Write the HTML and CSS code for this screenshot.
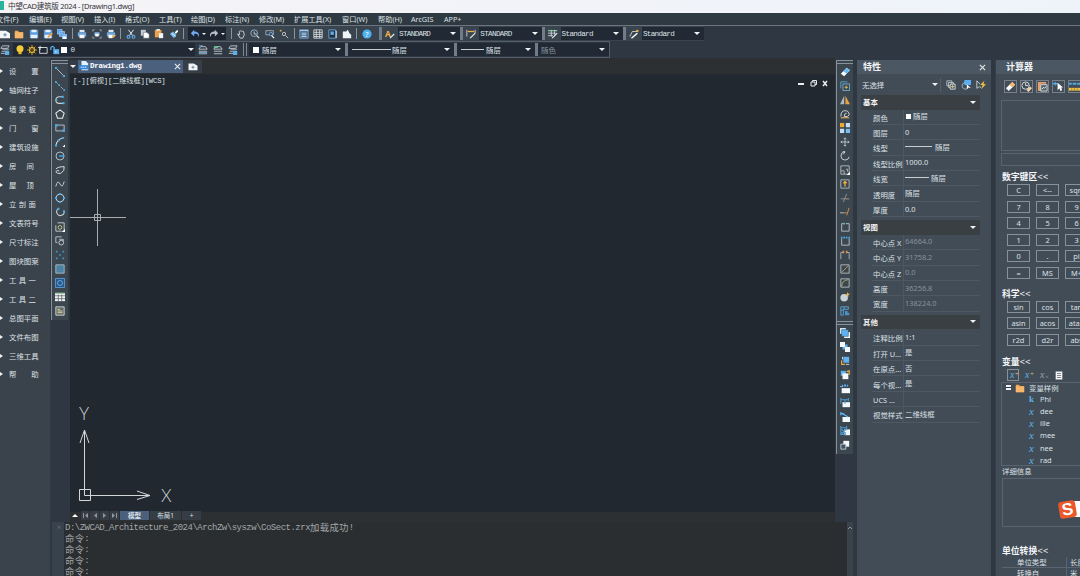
FILE: index.html
```
<!DOCTYPE html>
<html>
<head>
  <meta charset="utf-8">
  <title>中望CAD建筑版 2024</title>
  <link rel="stylesheet" href="styles.css">
</head>
<body>
  <!-- icon set -->
  <svg class="defs" width="0" height="0">
    <symbol id="new" viewBox="0 0 12 12"><path d="M0 2h7l5 3v6H0z" fill="#f2f5f7"/><path d="M6 5v4M4 7h4" stroke="#4b6f8c"/></symbol>
    <symbol id="open" viewBox="0 0 12 12"><path d="M1 2h4l1 2h5v7H1z" fill="#f0a552"/><path d="M1 4h10v7H1z" fill="#f6b76d"/></symbol>
    <symbol id="save" viewBox="0 0 12 12"><path d="M1 1h10v10H1z" fill="#5b9be0"/><path d="M3 1h6v3H3zM2 7h8v4H2z" fill="#e9f1f8"/></symbol>
    <symbol id="saveas" viewBox="0 0 12 12"><path d="M1 1h10v10H1z" fill="#5b9be0"/><path d="M3 1h6v3H3zM2 7h8v4H2z" fill="#e9f1f8"/><path d="M6 10l5-5" stroke="#f0a13a" stroke-width="2"/></symbol>
    <symbol id="saveall" viewBox="0 0 12 12"><path d="M0 0h6v6H0zM3 3h6v6H3z" fill="#5b9be0" stroke="#a9cff2" stroke-width=".8"/><path d="M6 6h6v6H6z" fill="#7db6ee"/><path d="M7 9h4v3H7z" fill="#fff"/></symbol>
    <symbol id="print" viewBox="0 0 12 12"><path d="M3 1h6v3H3z" fill="#dfe8f0"/><path d="M1 4h10v5H1z" fill="#6fa8dc"/><path d="M3 7h6v4H3z" fill="#f5f8fa"/></symbol>
    <symbol id="preview" viewBox="0 0 12 12"><path d="M1 3V1h2M9 1h2v2M11 9v2H9M3 11H1V9" fill="none" stroke="#aab6c0"/><path d="M3 4h6v4H3z" fill="#8cc0ef"/><path d="M4 6h4v3H4z" fill="#fff"/></symbol>
    <symbol id="plot" viewBox="0 0 12 12"><path d="M3 1h6v3H3z" fill="#dfe8f0"/><path d="M1 4h10v5H1z" fill="#6fa8dc"/><path d="M3 7h5v4H3z" fill="#fff"/><path d="M8 10l3-3" stroke="#f2b04a" stroke-width="2"/></symbol>
    <symbol id="cut" viewBox="0 0 12 12"><path d="M3 1l5 7M9 1L4 8" stroke="#e6ebef" stroke-width="1.2"/><g fill="none" stroke="#61abea" stroke-width="1.3"><circle cx="3" cy="9.3" r="1.7"/><circle cx="9" cy="9.3" r="1.7"/></g></symbol>
    <symbol id="copy" viewBox="0 0 12 12"><path d="M1 1h6v7H1z" fill="#c4ccd3"/><path d="M4 4h4l3 2v5H4z" fill="#fff" stroke="#4b5660" stroke-width=".6"/></symbol>
    <symbol id="paste" viewBox="0 0 12 12"><path d="M1 1h8v9H1z" fill="#eaa14d"/><path d="M3 0h4v2H3z" fill="#eee"/><path d="M6 5h5v6H6z" fill="#f4f7f9"/></symbol>
    <symbol id="brush" viewBox="0 0 12 12"><path d="M7 4l3-3 1 2-3 3z" fill="#fff"/><path d="M1 6l4-3 4 4-3 4z" fill="#72b5ee"/><path d="M3 5l5 4" stroke="#fff"/></symbol>
    <symbol id="undo" viewBox="0 0 12 12"><path d="M5 1L1 5l4 4V6c3-1 5 0 5 4 2-4 0-7-5-7z" fill="#70aaf0"/></symbol>
    <symbol id="redo" viewBox="0 0 12 12"><path d="M7 1l4 4-4 4V6C4 5 2 6 2 10 0 6 2 3 7 3z" fill="#b9c0c8"/></symbol>
    <symbol id="pan" viewBox="0 0 12 12"><path d="M2 6l2 1V3l1-1 1 1 1-1 1 1 1 0 1 4-2 4H5z" fill="none" stroke="#dfe4e8"/></symbol>
    <symbol id="zoomrt" viewBox="0 0 12 12"><circle cx="5" cy="5" r="4" fill="none" stroke="#9dc2df"/><path d="M5 3v3h3" fill="none" stroke="#dfe4e8"/><path d="M8 8l3 3" stroke="#dfe4e8" stroke-width="1.4"/></symbol>
    <symbol id="zoomwin" viewBox="0 0 12 12"><path d="M1 2h9v5H1z" fill="none" stroke="#a8b5c1"/><circle cx="7" cy="6" r="2" fill="#3b444d" stroke="#72b5ee"/><path d="M8 8l3 3" stroke="#fff" stroke-width="1.4"/></symbol>
    <symbol id="zoomprev" viewBox="0 0 12 12"><path d="M1 1h2v2H1z" fill="#e3b044"/><circle cx="6" cy="6" r="2" fill="none" stroke="#cfd6dc"/><path d="M8 8l3 3" stroke="#cfd6dc"/></symbol>
    <symbol id="props" viewBox="0 0 12 12"><path d="M1 1h10v10H1z" fill="#3e6487" stroke="#7fb0d8"/><path d="M1 2h10M3 5h6M3 7h6M3 9h6" stroke="#dfe8f0"/></symbol>
    <symbol id="grid" viewBox="0 0 12 12"><path d="M1 1h10v10H1zM4 1v10M8 1v10M1 4h10M1 6.500h10M1 9h10" fill="none" stroke="#d9e0e6"/></symbol>
    <symbol id="palette" viewBox="0 0 12 12"><path d="M1 1h8v10H1z" fill="#25303b" stroke="#66ace5"/><path d="M3 3h4v4H3z" fill="#66ace5"/><path d="M10 2v9" stroke="#e6edf2"/></symbol>
    <symbol id="cloud" viewBox="0 0 12 12"><path d="M1 3h4l2-2 2 4 2 2v4H1z" fill="#f1f4f6"/></symbol>
    <symbol id="help" viewBox="0 0 12 12"><circle cx="6" cy="6" r="5.500" fill="#4fb0ee"/><text x="6" y="9.200" font-size="9" text-anchor="middle" fill="#fff">?</text></symbol>
    <symbol id="textstyle" viewBox="0 0 12 12"><text x="0" y="9" font-size="10" fill="#f0b04a" font-weight="bold">A</text><path d="M6 11l5-5" stroke="#e3e9ee" stroke-width="1.500"/></symbol>
    <symbol id="dimstyle" viewBox="0 0 12 12"><path d="M1 1v8M11 1v4" stroke="#d9dfe5"/><path d="M2 3h8" stroke="#f0b04a" stroke-width="1.500"/><path d="M5 11l6-6" stroke="#e3e9ee" stroke-width="1.500"/></symbol>
    <symbol id="tablestyle" viewBox="0 0 12 12"><path d="M0 2h11M0 5h9M0 8h6M4 1v8M8 1v6" stroke="#d9dfe5"/><path d="M0 2h11" stroke="#79c590"/><path d="M5 11l6-6" stroke="#e3e9ee" stroke-width="1.500"/></symbol>
    <symbol id="leader" viewBox="0 0 12 12"><path d="M1 9l3-6h6" fill="none" stroke="#d9dfe5"/><circle cx="10" cy="2.500" r="1.500" fill="#f0b04a"/><path d="M3 11l7-6" stroke="#fff" stroke-width="1.700"/></symbol>
    <symbol id="layers" viewBox="0 0 12 12"><path d="M3 1h8L9 4H1zM3 5h8M2 7.500h8M1 10h10" fill="none" stroke="#cbd3da"/><path d="M6 7h5v5H6z" fill="#5faee8"/></symbol>
    <symbol id="layer2" viewBox="0 0 12 12"><path d="M3 2h6l2 3H1zM1 7.500h10M1 10.500h10" fill="none" stroke="#cbd3da"/><path d="M1 1h5M1 9h10" stroke="#66b3e9"/></symbol>
    <symbol id="layer3" viewBox="0 0 12 12"><path d="M3 2h6l2 3H1zM1 7.500h10M1 10.500h10" fill="none" stroke="#cbd3da"/><path d="M1 2.500h5" stroke="#66c59a" stroke-width="2"/></symbol>
    <symbol id="bulb" viewBox="0 0 12 12"><circle cx="6" cy="4.500" r="4.200" fill="#f6cb3a"/><path d="M4 8h4v3H4z" fill="#e5b52b"/></symbol>
    <symbol id="sun" viewBox="0 0 12 12"><path d="M6 0v12M0 6h12M2 2l8 8M10 2l-8 8" stroke="#f4bd31"/><circle cx="6" cy="6" r="3" fill="#57491f" stroke="#f4bd31" stroke-width="1.300"/></symbol>
    <symbol id="vp" viewBox="0 0 12 12"><path d="M2 3h9v7H2z" fill="none" stroke="#e5e9ed"/><path d="M0 3h5M2.500 1v5" stroke="#e5e9ed"/></symbol>
    <symbol id="lock" viewBox="0 0 12 12"><path d="M1 6V3q2-3 4 0v3" fill="none" stroke="#5ab1ee" stroke-width="1.500"/><path d="M4 5h7v6H4z" fill="#5ab1ee"/><path d="M7 7v2" stroke="#fff"/></symbol>
    <symbol id="dwg" viewBox="0 0 12 12"><path d="M3 0h5l3 3v8H3z" fill="#e9f3fc"/><path d="M0 5h11v5H0z" fill="#2f87dc"/><path d="M2 7.500h7" stroke="#fff" stroke-dasharray="2 .6"/></symbol>
    <symbol id="line" viewBox="0 0 12 12"><path d="M1 1l10 10" stroke="#c7d0d6"/><path d="M0 0h2.500v2.500H0zM9.500 9.500H12V12H9.500z" fill="#47a9e8"/></symbol>
    <symbol id="xline" viewBox="0 0 12 12"><path d="M1 1l10 10" stroke="#b9cbd6" stroke-dasharray="3 1.500"/><path d="M0 0h2v2H0zM4 4h2v2H4zM10 10h2v2h-2z" fill="#47a9e8"/></symbol>
    <symbol id="pline" viewBox="0 0 12 12"><path d="M9 2H5a4 4 0 0 0 0 8h5" fill="none" stroke="#c7d0d6" stroke-width="1.300"/><path d="M8 1h2.500v2.500H8zM9 8.500h2.500V11H9zM1 5h2v2H1z" fill="#47a9e8"/></symbol>
    <symbol id="polygon" viewBox="0 0 12 12"><path d="M6 1l5 4-2 6H3L1 5z" fill="none" stroke="#e5eaed" stroke-width="1.300"/></symbol>
    <symbol id="rect" viewBox="0 0 12 12"><path d="M1 2.500h10v7H1z" fill="none" stroke="#c7d0d6"/><path d="M0 1.500h3V4.500H0zM9 7.500h3v3H9z" fill="#47a9e8"/></symbol>
    <symbol id="arc" viewBox="0 0 12 12"><path d="M1 11Q2 3 10 1" fill="none" stroke="#d5dce1" stroke-width="1.300"/><path d="M0 9h2.500v2.500H0zM3 3h2.500v2.500H3zM9 0h2v2H9z" fill="#47a9e8"/><path d="M12 9v3H9z" fill="#fff"/></symbol>
    <symbol id="circle" viewBox="0 0 12 12"><circle cx="6" cy="6" r="4.800" fill="none" stroke="#c7d0d6"/><path d="M5 6h6" stroke="#47a9e8" stroke-width="1.800"/></symbol>
    <symbol id="cloudrev" viewBox="0 0 12 12"><path d="M1 5q2-3 10-3 1 5-4 8-5 1-6-2 1-2 4-1" fill="none" stroke="#d5dce1" stroke-width="1.200"/></symbol>
    <symbol id="spline" viewBox="0 0 12 12"><path d="M1 9Q3 0 6 6t5-3" fill="none" stroke="#b8cbd2" stroke-width="1.200"/></symbol>
    <symbol id="ellipse" viewBox="0 0 12 12"><circle cx="6" cy="6" r="4.600" fill="none" stroke="#c5d7e0" stroke-width="1.300"/><path d="M4.800 0h2.400v2.400H4.800zM4.800 9.600h2.400V12H4.800zM0 4.800h2.400v2.400H0zM9.600 4.800H12v2.400H9.600z" fill="#47a9e8"/></symbol>
    <symbol id="earc" viewBox="0 0 12 12"><path d="M4 2a4.500 4.500 0 1 0 7 3" fill="none" stroke="#c7d0d6" stroke-width="1.300"/><path d="M3 1h2.400v2.400H3zM9.600 4H12v2.400H9.600z" fill="#47a9e8"/></symbol>
    <symbol id="insert" viewBox="0 0 12 12"><path d="M3 1h8v8M1 4v7h7" fill="none" stroke="#d5dce1"/><circle cx="6" cy="6.500" r="2.300" fill="none" stroke="#d3d987"/><path d="M12 8v4H8z" fill="#fff"/></symbol>
    <symbol id="block" viewBox="0 0 12 12"><path d="M1 8V1h7M1 8h2" fill="none" stroke="#c7d0d6"/><path d="M5 4h5v2" fill="none" stroke="#c7d0d6"/><circle cx="7.500" cy="8" r="2.800" fill="none" stroke="#d5dce1"/></symbol>
    <symbol id="point" viewBox="0 0 12 12"><path d="M1 1h2v2H1zM9 1h2v2H9zM5 5h2v2H5zM1 9h2v2H1zM9 9h2v2H9z" fill="#3f95c8"/></symbol>
    <symbol id="hatch" viewBox="0 0 12 12"><path d="M1 1h10v10H1z" fill="#477e9f" stroke="#b7c4cb"/><path d="M3 5l2-2M3 9l6-6M7 9l2-2" stroke="#5b9bbd" stroke-width=".8"/></symbol>
    <symbol id="region" viewBox="0 0 12 12"><path d="M.6.6h10.800v10.800H.6z" fill="#29588a" stroke="#5da0df"/><circle cx="6" cy="6" r="3" fill="none" stroke="#72b4eb"/></symbol>
    <symbol id="table" viewBox="0 0 12 12"><path d="M0 1h12v10H0z" fill="#f0f4f3"/><path d="M0 1.500h12" stroke="#68ae72"/><path d="M0 4.500h12M0 8h12M4 3v9M8 3v9" stroke="#48525b" stroke-width=".8"/></symbol>
    <symbol id="mtext" viewBox="0 0 12 12"><path d="M1 1h10v10H1z" fill="#62696b" stroke="#dde2e2"/><path d="M3 4h3M3 6h6M3 8h6" stroke="#f0e493"/></symbol>
    <symbol id="erase" viewBox="0 0 12 12"><path d="M1 8l7-7 4 3-7 7z" fill="#fff"/><path d="M4 5l4-4 4 3-4 4z" fill="#6bb9f1"/></symbol>
    <symbol id="copyobj" viewBox="0 0 12 12"><path d="M1 9V1h8" fill="none" stroke="#5eaee4"/><path d="M3.500 3.500h8v8h-8z" fill="none" stroke="#7db9e0"/><path d="M7.500 5.500v4M5.500 7.500h4" stroke="#f0ca5a"/></symbol>
    <symbol id="mirror" viewBox="0 0 12 12"><path d="M5 1v10H0z" fill="#aeb8bf"/><path d="M6.500 1v10H12z" fill="#e6a23f"/></symbol>
    <symbol id="offset" viewBox="0 0 12 12"><path d="M1 9q0-7 5-7 5 0 5 5-1 3-6 2 0-4 3-4" fill="none" stroke="#c5cbcf" stroke-width="1.200"/><path d="M1 10.500h10" stroke="#e0a95e" stroke-width="1.400"/></symbol>
    <symbol id="array" viewBox="0 0 12 12"><path d="M0 0h5v5H0z" fill="#f0a637"/><path d="M7 0h5v5H7zM0 7h5v5H0z" fill="#c0ddf4"/><path d="M7 7h5v5H7z" fill="#76bef3"/></symbol>
    <symbol id="move" viewBox="0 0 12 12"><path d="M6 1v10M1 6h10M4.500 2.500L6 1l1.500 1.500M4.500 9.500L6 11l1.500-1.500M2.500 4.500L1 6l1.500 1.500M9.500 4.500L11 6 9.500 7.500" fill="none" stroke="#c7cfd6"/></symbol>
    <symbol id="rotate" viewBox="0 0 12 12"><path d="M5 1a5 5 0 1 0 6 6M3 0l3 1-2 3" fill="none" stroke="#c7cfd6" stroke-width="1.200"/></symbol>
    <symbol id="scale" viewBox="0 0 12 12"><path d="M1 1h10v10H1zM1 7h4v4M7 5h2v3" fill="none" stroke="#bcc4ca"/><path d="M12 8v4H8z" fill="#fff"/></symbol>
    <symbol id="stretch" viewBox="0 0 12 12"><path d="M1 1h10v10H1z" fill="none" stroke="#bcc4ca"/><path d="M6 9V3M4 5l2-2 2 2" fill="none" stroke="#f0ad3c" stroke-width="1.600"/></symbol>
    <symbol id="trim" viewBox="0 0 12 12"><path d="M1 7h10M4 11l4-10" stroke="#919ca5"/><path d="M7 7h4" stroke="#a96f4d"/></symbol>
    <symbol id="extend" viewBox="0 0 12 12"><path d="M0 7h5" stroke="#c4ccd2"/><path d="M5 7h3M8 10l3-9" stroke="#cb8b55" stroke-width="1.200"/></symbol>
    <symbol id="break1" viewBox="0 0 12 12"><path d="M5 2H2v9h9V2H7" fill="none" stroke="#c4ccd2"/><path d="M4 1h2v2H4z" fill="#52ba92"/></symbol>
    <symbol id="break2" viewBox="0 0 12 12"><path d="M2 3v8h9V3" fill="none" stroke="#c4ccd2"/><path d="M1 1h2v2H1zM4 1h2v2H4zM7 1h2v2H7zM10 1h2v2h-2z" fill="#4ba9e1"/></symbol>
    <symbol id="join" viewBox="0 0 12 12"><path d="M1 11V3h3M11 11V3H8" fill="none" stroke="#b3bbc0"/><path d="M3 1h2v3H3zM7 1h2v3H7z" fill="#d69552"/></symbol>
    <symbol id="chamfer" viewBox="0 0 12 12"><path d="M1 1h10v10H1z" fill="none" stroke="#bcc4ca"/><path d="M2 10l8-8" stroke="#c9a46a"/></symbol>
    <symbol id="fillet" viewBox="0 0 12 12"><path d="M1 1h10v10H1z" fill="none" stroke="#bcc4ca"/><path d="M2 10Q2 3 10 2" fill="none" stroke="#b9b976"/></symbol>
    <symbol id="explode" viewBox="0 0 12 12"><circle cx="5" cy="7" r="4.500" fill="#c9d2d8"/><path d="M9 0l1 2 2 0-2 2 0 2-2-2-2 0 2-1z" fill="#f2bd4f"/></symbol>
    <symbol id="blockedit" viewBox="0 0 12 12"><path d="M1 1h9v3H4v7H1zM1 5h3M5 1v3" fill="none" stroke="#5caee5"/><path d="M6 6h3v2h2v3H6z" fill="#4c91c7"/></symbol>
    <symbol id="front" viewBox="0 0 12 12"><path d="M0 0h7v7H0z" fill="#cde5f7"/><path d="M5 5h7v7H5z" fill="#f4f7fa"/><path d="M2 2h8v8H2z" fill="#5fb3f2" stroke="#33495c" stroke-width=".6"/></symbol>
    <symbol id="back" viewBox="0 0 12 12"><path d="M3 3h6v6H3z" fill="#5fb3f2"/><path d="M0 0h6v6H0zM6 6h6v6H6z" fill="#f5f8fa"/></symbol>
    <symbol id="above" viewBox="0 0 12 12"><path d="M4 1h7v7H4z" fill="#5fb3f2"/><path d="M3 1v3M7 10h4" stroke="#e6eef5"/><path d="M2 5v5h4" fill="none" stroke="#e9a63d" stroke-width="1.500"/></symbol>
    <symbol id="under" viewBox="0 0 12 12"><path d="M1 1h6v6H1z" fill="#5fb3f2"/><path d="M3 4h7v7H3z" fill="#f5f8fa"/><path d="M8 2l3-1v5" fill="none" stroke="#f0b14b" stroke-width="1.500"/></symbol>
    <symbol id="annofront" viewBox="0 0 12 12"><path d="M2 5h10v6H2z" fill="#f5f8fa"/><path d="M0 3h3V1M5 3l1-2 1 2M9 3V1" fill="none" stroke="#5fb3f2" stroke-width="1.400"/></symbol>
    <symbol id="dimfront" viewBox="0 0 12 12"><path d="M3 5h9v6H3z" fill="#f5f8fa"/><path d="M1 0v7M10 0v4M1 2h9M6 2v5" stroke="#4f9ace" stroke-width="1.300"/></symbol>
    <symbol id="leadfront" viewBox="0 0 12 12"><path d="M3 6h9v6H3z" fill="#f5f8fa"/><path d="M1 4V1l9 5M1 2h4" fill="none" stroke="#5fb3f2" stroke-width="1.500"/></symbol>
    <symbol id="allfront" viewBox="0 0 12 12"><path d="M5 4h7v7H5z" fill="#f5f8fa"/><path d="M1 0v10h6M1 2h7M8 0v5M2 4l5 5M7 4L2 9" fill="none" stroke="#4f9ace" stroke-width="1.300"/></symbol>
    <symbol id="hatchback" viewBox="0 0 12 12"><path d="M4 1h7v7H4z" fill="#f5f8fa"/><path d="M1 5h6v6H1z" fill="#45535f" stroke="#c5d7e5"/></symbol>
    <symbol id="pickadd" viewBox="0 0 12 12"><path d="M1 1h6v6H1zM3 3h6v6H3z" fill="none" stroke="#c2c9ce"/><path d="M5 5h6v6H5z" fill="#4a535c" stroke="#e1e5e8"/><path d="M8 6v4M6 8h4" stroke="#d9dd7e"/></symbol>
    <symbol id="select" viewBox="0 0 12 12"><path d="M4 0h8v6H4z" fill="#59aef0"/><path d="M5 3a4 4 0 1 0 3 7" fill="none" stroke="#a8c8df"/><path d="M7 5v6l2-2 3 1z" fill="#fff"/></symbol>
    <symbol id="quick" viewBox="0 0 12 12"><path d="M1 1v9l3-2 2 1M1 1l4 4" fill="none" stroke="#d5dade"/><path d="M10 1L5 6h3l-2 5 6-6H9z" fill="#f4c544"/></symbol>
    <symbol id="history" viewBox="0 0 12 12"><circle cx="5" cy="5" r="4" fill="none" stroke="#dde2e6"/><path d="M5 2v3h3" fill="none" stroke="#dde2e6"/><path d="M6 10l4-4 2 2-4 4z" fill="#f2d5a4"/></symbol>
    <symbol id="eraser" viewBox="0 0 12 12"><path d="M1 8l7-7 3 3-7 7z" fill="#fff"/><path d="M5 4l3-3 3 3-3 3z" fill="#f1b56c"/></symbol>
    <symbol id="pastecalc" viewBox="0 0 12 12"><path d="M1 1h9v2H4v8H1z" fill="#e6a06b"/><path d="M4 4h7v7H4z" fill="#51606b" stroke="#ddd"/><path d="M5 9l2-2 1 1 2-2" stroke="#fff" fill="none"/></symbol>
    <symbol id="getpt" viewBox="0 0 12 12"><path d="M0 3h5M2.500 1v4" stroke="#50a9e5" stroke-width="1.400"/><path d="M5 2v8l2-2 1 3 2-1-1-3h2z" fill="#fff"/></symbol>
    <symbol id="dist" viewBox="0 0 12 12"><path d="M0 3h3M9 3h3M4 3h4" stroke="#50a9e5" stroke-width="2"/><path d="M0 9h12" stroke="#f0c33c" stroke-width="3"/><path d="M3 8v2M6 8v2M9 8v2" stroke="#555" stroke-width=".6"/></symbol>
    <symbol id="calc" viewBox="0 0 12 12"><path d="M1 0h10v12H1z" fill="#f2f4f5"/><path d="M3 3h6M3 6h6M3 9h6" stroke="#47505a"/></symbol>
  </svg>

  <header class="title-bar"><span class="logo"></span>中望CAD建筑版 2024 - [Drawing1.dwg]</header>

  <nav class="menu-bar">
    <span class="m1">文件(F)</span><span class="m2">编辑(E)</span><span class="m3">视图(V)</span><span class="m4">插入(I)</span><span class="m5">格式(O)</span><span class="m6">工具(T)</span><span class="m7">绘图(D)</span><span class="m8">标注(N)</span><span class="m9">修改(M)</span><span class="m10">扩展工具(X)</span><span class="m11">窗口(W)</span><span class="m12">帮助(H)</span><span class="m13">ArcGIS</span><span>APP+</span>
  </nav>

  <div class="toolbar row-one">
    <div class="tools standard">
      <svg><use href="#new"/></svg><svg><use href="#open"/></svg><svg><use href="#save"/></svg><svg><use href="#saveas"/></svg><svg><use href="#saveall"/></svg>
      <i class="sep"></i>
      <svg><use href="#print"/></svg><svg><use href="#preview"/></svg><svg><use href="#plot"/></svg>
      <i class="sep"></i>
      <svg><use href="#cut"/></svg><svg><use href="#copy"/></svg><svg><use href="#paste"/></svg><svg><use href="#brush"/></svg>
      <i class="sep"></i>
      <div class="undo-box"><svg><use href="#undo"/></svg><b class="caret"></b><svg><use href="#redo"/></svg><b class="caret"></b></div>
      <i class="sep"></i>
      <svg><use href="#pan"/></svg><svg><use href="#zoomrt"/></svg><svg><use href="#zoomwin"/></svg><svg><use href="#zoomprev"/></svg>
      <i class="sep"></i>
      <svg><use href="#props"/></svg><svg><use href="#grid"/></svg><svg><use href="#palette"/></svg><svg><use href="#cloud"/></svg>
      <i class="sep"></i>
      <svg><use href="#help"/></svg>
    </div>
    <div class="styles">
      <div class="style-item"><i class="grip"></i><svg><use href="#textstyle"/></svg><div class="combo mono">STANDARD<b class="caret"></b></div></div>
      <div class="style-item"><i class="grip"></i><svg><use href="#dimstyle"/></svg><div class="combo mono">STANDARD<b class="caret"></b></div></div>
      <div class="style-item"><i class="grip"></i><svg><use href="#tablestyle"/></svg><div class="combo mono">Standard<b class="caret"></b></div></div>
      <div class="style-item"><i class="grip"></i><svg><use href="#leader"/></svg><div class="combo mono">Standard<b class="caret"></b></div></div>
    </div>
  </div>

  <div class="toolbar row-two">
    <svg><use href="#layers"/></svg>
    <div class="combo layer-combo">
      <svg><use href="#bulb"/></svg><svg><use href="#sun"/></svg><svg><use href="#vp"/></svg><svg><use href="#lock"/></svg><i class="swatch"></i><span class="mono">0</span><b class="caret"></b>
    </div>
    <div class="layer-tools"><svg><use href="#layer2"/></svg><svg><use href="#layer3"/></svg><svg><use href="#layers"/></svg></div>
    <i class="grip double"></i>
    <div class="combo color-combo"><i class="swatch"></i>随层<b class="caret"></b></div>
    <i class="grip"></i>
    <div class="combo type-combo"><i class="stroke"></i>随层<b class="caret"></b></div>
    <i class="grip"></i>
    <div class="combo weight-combo"><i class="stroke"></i>随层<b class="caret"></b></div>
    <i class="grip"></i>
    <div class="combo plot-combo">随色<b class="caret"></b></div>
  </div>

  <div class="workspace">
    <nav class="side-menu">
      <div><span>设 置</span></div>
      <div><span>轴网柱子</span></div>
      <div><span class="three">墙 梁 板</span></div>
      <div><span>门 窗</span></div>
      <div><span>建筑设施</span></div>
      <div><span class="two">房 间</span></div>
      <div><span class="two">屋 顶</span></div>
      <div><span class="three">立 剖 面</span></div>
      <div><span>文表符号</span></div>
      <div><span>尺寸标注</span></div>
      <div><span>图块图案</span></div>
      <div><span class="three">工 具 一</span></div>
      <div><span class="three">工 具 二</span></div>
      <div><span>总图平面</span></div>
      <div><span>文件布图</span></div>
      <div><span>三维工具</span></div>
      <div><span>帮 助</span></div>
    </nav>

    <div class="center">
      <div class="editor">
        <div class="vertical-bar draw-bar">
          <i class="handle"></i>
          <svg><use href="#line"/></svg><svg><use href="#xline"/></svg><svg><use href="#pline"/></svg><svg><use href="#polygon"/></svg><svg><use href="#rect"/></svg><svg><use href="#arc"/></svg><svg><use href="#circle"/></svg><svg><use href="#cloudrev"/></svg><svg><use href="#spline"/></svg><svg><use href="#ellipse"/></svg><svg><use href="#earc"/></svg><svg><use href="#insert"/></svg><svg><use href="#block"/></svg><svg><use href="#point"/></svg><svg><use href="#hatch"/></svg><svg><use href="#region"/></svg><svg><use href="#table"/></svg><svg><use href="#mtext"/></svg>
        </div>

        <main class="document">
          <div class="doc-tabs">
            <span class="tab-list"><b class="caret"></b></span>
            <div class="doc-tab"><svg><use href="#dwg"/></svg><span>Drawing1.dwg</span><svg class="close" viewBox="0 0 8 8"><path d="M1 1l6 6M7 1L1 7"/></svg></div>
            <span class="new-tab"><svg><use href="#new"/></svg></span>
          </div>
          <div class="canvas">
            <div class="canvas-top">
              <span class="view-label">[-][俯视][二维线框][WCS]</span>
              <svg class="window-buttons" viewBox="0 0 34 10"><path d="M1 6h6" stroke-width="2"/><path d="M14 4h4v4h-4zM15.500 4V2.500h4v4H18" /><path d="M26 3l4 5M30 3l-4 5" stroke-width="1.500"/></svg>
            </div>
            <svg class="drawing" viewBox="0 0 764 424">
              <g class="cross"><path d="M0 131.500h56M27.500 103v57"/><path d="M24.500 128.500h6v6h-6z"/></g>
              <g class="ucs"><path d="M9.500 403.500h11v11h-11zM14.500 409.500V344M10 357l4.500-13 4.500 13M14.500 409.500H80M67 405l13 4.500-13 4"/><text x="9" y="334">Y</text><text x="91" y="416">X</text></g>
            </svg>
          </div>
          <div class="layout-tabs">
            <svg class="tab-arrows" viewBox="0 0 49 9"><path d="M2 6l3-3 3 3z" fill="#fff"/><g class="arrow-bg"><path d="M11 0h8v9h-8zM20 0h9v9h-9zM30 0h9v9h-9zM40 0h9v9h-9z"/></g><path d="M13 2v5h1V2zM18 2v5l-3-2.500zM27 2v5l-3-2.500zM33 2v5l3-2.500zM42 2v5l3-2.500zM46 2v5h1V2z" fill="#8e98a2"/></svg>
            <span class="active">模型</span><span class="layout">布局1</span><span class="plus">+</span>
          </div>
        </main>

        <div class="vertical-bar modify-bar">
          <i class="handle"></i>
          <svg><use href="#erase"/></svg><svg><use href="#copyobj"/></svg><svg><use href="#mirror"/></svg><svg><use href="#offset"/></svg><svg><use href="#array"/></svg><svg><use href="#move"/></svg><svg><use href="#rotate"/></svg><svg><use href="#scale"/></svg><svg><use href="#stretch"/></svg><svg><use href="#trim"/></svg><svg><use href="#extend"/></svg><svg><use href="#break1"/></svg><svg><use href="#break2"/></svg><svg><use href="#join"/></svg><svg><use href="#chamfer"/></svg><svg><use href="#fillet"/></svg><svg><use href="#explode"/></svg><svg><use href="#blockedit"/></svg>
          <i class="handle second"></i>
          <svg><use href="#front"/></svg><svg><use href="#back"/></svg><svg><use href="#above"/></svg><svg><use href="#under"/></svg><svg><use href="#annofront"/></svg><svg><use href="#dimfront"/></svg><svg><use href="#leadfront"/></svg><svg><use href="#allfront"/></svg><svg><use href="#hatchback"/></svg>
        </div>
      </div>

      <div class="command">
        <div class="command-grip">×</div>
        <div class="command-log">
          <p>D:\ZWCAD_Architecture_2024\ArchZw\syszw\CoSect.zrx<span>加载成功</span>!</p>
          <p><span>命令</span>:</p>
          <p><span>命令</span>:</p>
          <p><span>命令</span>:</p>
          <p><span>命令</span>:</p>
        </div>
        <div class="scrollbar"><svg viewBox="0 0 6 6"><path d="M1 4l2-2 2 2"/></svg></div>
      </div>
    </div>

    <aside class="properties">
      <h2>特性<svg class="close" viewBox="0 0 8 8"><path d="M1 1l6 6M7 1L1 7"/></svg></h2>
      <div class="selection"><div class="select-box">无选择<b class="caret"></b></div><svg><use href="#pickadd"/></svg><svg><use href="#select"/></svg><svg><use href="#quick"/></svg></div>
      <section class="group">
        <h3>基本<b class="caret"></b></h3>
        <dl>
          <dt>颜色</dt><dd><i class="swatch"></i>随层</dd>
          <dt>图层</dt><dd>0</dd>
          <dt>线型</dt><dd><i class="stroke"></i>随层</dd>
          <dt>线型比例</dt><dd>1000.0</dd>
          <dt>线宽</dt><dd><i class="stroke short"></i>随层</dd>
          <dt>透明度</dt><dd>随层</dd>
          <dt>厚度</dt><dd>0.0</dd>
        </dl>
      </section>
      <section class="group view">
        <h3>视图<b class="caret"></b></h3>
        <dl>
          <dt>中心点 X</dt><dd>64664.0</dd>
          <dt>中心点 Y</dt><dd>31758.2</dd>
          <dt>中心点 Z</dt><dd>0.0</dd>
          <dt>高度</dt><dd>36256.8</dd>
          <dt>宽度</dt><dd>138224.0</dd>
        </dl>
      </section>
      <section class="group">
        <h3>其他<b class="caret"></b></h3>
        <dl>
          <dt>注释比例</dt><dd>1:1</dd>
          <dt>打开 U...</dt><dd>是</dd>
          <dt>在原点...</dt><dd>否</dd>
          <dt>每个视...</dt><dd>是</dd>
          <dt>UCS ...</dt><dd></dd>
          <dt>视觉样式</dt><dd>二维线框</dd>
        </dl>
      </section>
    </aside>

    <aside class="calculator">
      <h2>计算器</h2>
      <div class="calc-tools"><svg><use href="#eraser"/></svg><svg><use href="#history"/></svg><svg><use href="#pastecalc"/></svg><svg><use href="#getpt"/></svg><svg><use href="#dist"/></svg></div>
      <div class="calc-history"></div>
      <div class="calc-input"></div>
      <h4>数字键区<span>&lt;&lt;</span></h4>
      <div class="keys">
        <span>C</span><span>&lt;--</span><span>sqrt</span>
        <span>7</span><span>8</span><span>9</span>
        <span>4</span><span>5</span><span>6</span>
        <span>1</span><span>2</span><span>3</span>
        <span>0</span><span>.</span><span>pi</span>
        <span>=</span><span>MS</span><span>M+</span>
      </div>
      <h4 class="science">科学<span>&lt;&lt;</span></h4>
      <div class="keys">
        <span>sin</span><span>cos</span><span>tan</span>
        <span>asin</span><span>acos</span><span>atan</span>
        <span>r2d</span><span>d2r</span><span>abs</span>
      </div>
      <h4 class="variables">变量<span>&lt;&lt;</span></h4>
      <div class="var-tools"><span class="boxed">x<sup>+</sup></span><span>x<sup>+</sup></span><span class="off">x<sub>×</sub></span><svg><use href="#calc"/></svg></div>
      <div class="tree">
        <div class="root"><i class="minus"></i><svg><use href="#open"/></svg>变量样例</div>
        <div><em class="const">k</em>Phi</div>
        <div><em>x</em>dee</div>
        <div><em>x</em>ille</div>
        <div><em>x</em>mee</div>
        <div><em>x</em>nee</div>
        <div><em>x</em>rad</div>
      </div>
      <p class="detail-title">详细信息</p>
      <div class="detail"></div>
      <h4 class="units">单位转换<span>&lt;&lt;</span></h4>
      <div class="unit-row"><span>单位类型</span><span>长度</span></div>
      <div class="unit-row"><span>转换自</span><span>米</span></div>
    </aside>
  </div>

  <div class="ime"><span>S</span></div>
</body>
</html>
```
FILE: styles.css
```
* {
  box-sizing: border-box;
}

body {
  margin: 0;
  width: 1080px;
  height: 576px;
  overflow: hidden;
  display: flex;
  flex-direction: column;
  background: #2f3842;
  color: #dde1e5;
  font: 7.4px/10px "Noto Sans", "Noto Sans CJK SC", sans-serif;
}

.defs {
  display: none;
}

h2, h3, h4, p, dl, dd {
  margin: 0;
}

svg {
  flex: none;
  width: 10px;
  height: 10px;
}

.caret {
  flex: none;
  border: 3px solid transparent;
  border-top: 3.5px solid #f0f2f4;
  border-bottom: 0;
}

.mono {
  font-family: "Liberation Mono", monospace;
  font-size: 7.6px;
  letter-spacing: -0.65px;
}

.swatch {
  flex: none;
  width: 6px;
  height: 6px;
  background: #fff;
}

.stroke {
  flex: none;
  height: 1px;
  background: #c8cdd2;
}

/* title and menus */
.title-bar {
  flex: none;
  height: 13px;
  display: flex;
  align-items: center;
  gap: 4px;
  background: linear-gradient(90deg, #f5f3f6, #eef3fa);
  color: #343438;
  font-size: 7.6px;
  letter-spacing: -0.32px;
  padding-bottom: 2px;
  white-space: nowrap;
}

.logo {
  width: 4px;
  height: 9px;
  background: #27b39c;
}

.menu-bar {
  flex: none;
  height: 12px;
  display: flex;
  align-items: center;
  background: #2f3941;
  font-size: 7.2px;
  white-space: nowrap;
}

.menu-bar span {
  flex: none;
}

.m1 { width: 33px; margin-left: -4px; }
.m2 { width: 32px; }
.m3 { width: 33px; }
.m4 { width: 31px; }
.m5 { width: 34px; }
.m6 { width: 32px; }
.m7 { width: 34px; }
.m8 { width: 34px; }
.m9 { width: 35px; }
.m10 { width: 48px; }
.m11 { width: 36px; }
.m12 { width: 33px; }
.m13 { width: 33px; }

/* toolbars */
.toolbar {
  flex: none;
  height: 16px;
  display: flex;
  align-items: center;
}

.row-one {
  border-top: 1px solid #6c757f;
}

.row-two {
  height: 17px;
  width: 610px;
  border-top: 1px solid #535d68;
  border-bottom: 1px solid #535d68;
  border-right: 1px solid #535d68;
}

.tools {
  display: flex;
  align-items: center;
  height: 15px;
  width: 379px;
  background: #3a444e;
}

.standard {
  padding-right: 7px;
  justify-content: space-between;
}

.sep {
  width: 1px;
  height: 11px;
  background: #8a949e;
}

.undo-box {
  display: flex;
  align-items: center;
  justify-content: space-around;
  width: 38px;
  height: 13px;
  background: #1d2530;
}

.undo-box svg {
  width: 10px;
}

.undo-box .caret {
  border-width: 2.5px;
  border-bottom-width: 0;
}

.styles {
  display: flex;
}

.style-item {
  display: flex;
  align-items: center;
  width: 81.3px;
  height: 15px;
  background: #3a444e;
}

.style-item svg {
  margin: 0 3px;
}

.grip {
  flex: none;
  width: 3px;
  height: 13px;
  background: #727c88;
}

.combo {
  display: flex;
  align-items: center;
  height: 13px;
  background: #212934;
  white-space: nowrap;
}

.combo .caret {
  margin-left: auto;
  margin-right: 4px;
}

.style-item .combo {
  flex: 1;
  padding-left: 1px;
}

.layer-combo {
  width: 182px;
  margin-left: 3px;
  padding-left: 2px;
  gap: 1.5px;
}

.layer-combo .mono {
  margin-left: 2px;
}

.layer-combo .caret {
  margin-right: 1px;
}

.layer-tools {
  display: flex;
  justify-content: space-between;
  width: 48px;
  padding: 0 5px 0 3px;
}

.double {
  width: 4px;
  background: none;
  border: solid #7e8893;
  border-width: 0 1px;
}

.color-combo {
  width: 96px;
  margin-left: 2px;
  padding-left: 4px;
  gap: 3px;
}

.type-combo {
  width: 106px;
  padding-left: 4px;
}

.type-combo .stroke {
  width: 39px;
  margin-right: 1px;
}

.weight-combo {
  width: 78px;
  padding-left: 4px;
}

.weight-combo .stroke {
  width: 23px;
  margin-right: 2px;
}

.plot-combo {
  width: 71px;
  padding-left: 3px;
  color: #89929b;
}

/* main area */
.workspace {
  flex: 1;
  min-height: 0;
  display: flex;
}

.side-menu {
  flex: none;
  width: 50px;
  padding-top: 4px;
  background: #3a424b;
}

.side-menu div {
  display: flex;
  align-items: center;
  gap: 6px;
  height: 18.95px;
}

.side-menu div::before {
  content: "";
  border: 2.5px solid transparent;
  border-left: 3px solid #f0f2f4;
  border-right: 0;
}

.side-menu span {
  width: 29.6px;
  text-align-last: justify;
  white-space: nowrap;
}

.side-menu .three {
  width: 27px;
}

.side-menu .two {
  width: 25px;
}

.center {
  flex: none;
  width: 807px;
  display: flex;
  flex-direction: column;
}

.editor {
  display: flex;
  height: 464px;
  padding-left: 1px;
}

.vertical-bar {
  flex: none;
  display: flex;
  flex-direction: column;
  align-items: center;
  width: 17px;
  margin-top: 2px;
  background: #3c464f;
  border-left: 1px solid #87919b;
}

.vertical-bar svg {
  margin-bottom: 4.1px;
}

.draw-bar {
  height: 260px;
}

.handle {
  flex: none;
  align-self: stretch;
  height: 4px;
  margin-bottom: 2.5px;
  border: solid #88929c;
  border-width: 1px 0;
}

.second {
  margin: 0.5px 0 3px;
}

.modify-bar {
  height: 394px;
  margin-left: 1px;
}

.document {
  width: 765px;
  margin-left: 2px;
  display: flex;
  flex-direction: column;
  background: #2c3032;
}

.doc-tabs {
  display: flex;
  align-items: center;
  height: 15px;
  padding-top: 1px;
}

.tab-list {
  display: flex;
  align-items: center;
  width: 8px;
  height: 13px;
  background: #343d47;
}

.doc-tab {
  display: flex;
  align-items: center;
  width: 105px;
  height: 13px;
  padding: 0 2px 0 1px;
  background: #4b607d;
  color: #fff;
  font: bold 7.6px "Liberation Mono", monospace;
  letter-spacing: -0.26px;
}

.doc-tab span {
  margin-left: 1px;
}

.close {
  width: 7px;
  height: 7px;
  margin-left: auto;
  stroke: #e8ecef;
  stroke-width: 1.2;
}

.new-tab {
  display: flex;
  align-items: center;
  justify-content: center;
  width: 19px;
  height: 13px;
  background: #363e47;
}

.new-tab svg {
  height: 9px;
}

.canvas {
  height: 438px;
  margin-top: 1px;
  background: #212830;
}

.canvas-top {
  display: flex;
  justify-content: space-between;
  height: 12px;
}

.view-label {
  padding: 2px 0 0 3px;
  font-family: "Liberation Mono", "Noto Sans CJK SC", monospace;
  font-size: 7.2px;
  letter-spacing: -0.13px;
}

.window-buttons {
  width: 34px;
  height: 10px;
  margin: 4px 4px 0 0;
  fill: none;
  stroke: #e8ecef;
}

.drawing {
  display: block;
  width: 764px;
  height: 424px;
  fill: none;
}

.cross {
  stroke: #a8adb1;
}

.ucs path {
  stroke: #d2d6d9;
}

.ucs text {
  fill: #d2d6d9;
  font: 300 17px Lato, sans-serif;
}

.layout-tabs {
  display: flex;
  align-items: center;
  height: 10px;
  gap: 1px;
  font-size: 6.5px;
  margin-top: -2px;
}

.layout-tabs span {
  height: 9px;
  line-height: 9px;
  background: #363d45;
  text-align: center;
}

.tab-arrows {
  width: 49px;
  height: 9px;
}

.arrow-bg {
  fill: #363d45;
}

.layout-tabs .active {
  width: 29px;
  background: #4b607d;
  font-weight: bold;
}

.layout {
  width: 31px;
}

.plus {
  width: 19px;
}

.command {
  flex: 1;
  min-height: 0;
  display: flex;
  margin: 0 4px 0 2px;
  background: #2b2e30;
  color: #a2a7aa;
  overflow: hidden;
}

.command-grip {
  width: 12px;
  padding-left: 5px;
  background: #37424c;
  color: #65717c;
}

.command-log {
  flex: 1;
  padding-left: 1px;
  font-family: "Liberation Mono", monospace;
  font-size: 9px;
  letter-spacing: -0.5px;
}

.command-log p {
  height: 11px;
  line-height: 12px;
  white-space: nowrap;
}

.command-log span {
  display: inline-block;
  vertical-align: top;
  height: 11px;
  line-height: 11px;
  font-family: "Noto Sans CJK SC", sans-serif;
  font-size: 9.4px;
  letter-spacing: 0.3px;
}

.scrollbar {
  width: 6px;
  background: #3a424a;
}

.scrollbar svg {
  width: 6px;
  height: 6px;
  margin-top: 3px;
  fill: none;
  stroke: #89939d;
}

/* properties */
.properties {
  flex: none;
  width: 134px;
  margin: 2px 0 0;
  background: #424c57;
}

h2 {
  display: flex;
  align-items: center;
  height: 14px;
  padding: 0 5px 0 6px;
  background: #4b5763;
  font-size: 9px;
  color: #f1f3f5;
}

.selection {
  display: flex;
  align-items: center;
  height: 15px;
  margin: 3px 5px 3px 4px;
  gap: 5px;
}

.select-box {
  display: flex;
  align-items: center;
  width: 80px;
  height: 14px;
  padding: 0 2px 0 1px;
  border-right: 1px solid #535e69;
}

.select-box .caret {
  margin-left: auto;
}

.group {
  width: 119px;
  margin-left: 4px;
  margin-bottom: 3px;
}

.group h3 {
  display: flex;
  align-items: center;
  height: 14.5px;
  padding: 0 4px 0 2px;
  background: #393f43;
  color: #f1f3f5;
  font-size: 7.4px;
}

.group h3 .caret {
  margin-left: auto;
}

.group dl {
  display: grid;
  grid-template-columns: 31px 77px;
  grid-auto-rows: 15.4px;
  margin-left: 11px;
}

.view + .group dl {
  padding-top: 1px;
}

.group dt,
.group dd {
  display: flex;
  align-items: center;
  padding: 2px 0 0 1px;
  border-bottom: 1px solid #4e5862;
  white-space: nowrap;
}

.group dd {
  padding: 0 0 1px 1px;
  border-left: 1px solid #4e5862;
}

.group .swatch {
  width: 5px;
  height: 5px;
  margin: 0 2px 0 1px;
}

.group .stroke {
  width: 27px;
  margin-right: 3px;
}

.group .short {
  width: 24px;
  margin-right: 2px;
}

.view dd {
  color: #87919a;
}

/* calculator */
.calculator {
  flex: none;
  width: 110px;
  margin: 2px 0 0 4px;
  background: #424c57;
  border-left: 1px solid #343e48;
}

.calculator h2 {
  padding-left: 10px;
}

.calc-tools {
  display: flex;
  gap: 3px;
  margin: 6px 0 7px 8px;
}

.calc-tools svg {
  width: 13px;
  height: 13px;
  border: 1px solid #76808a;
}

.calc-history,
.calc-input,
.tree,
.detail {
  margin-left: 5px;
  border: 1px solid #596470;
}

.calc-history {
  height: 51px;
}

.calc-input {
  height: 13px;
  margin-top: 2px;
}

h4 {
  padding-left: 6px;
  font-size: 8.8px;
  line-height: 11px;
  color: #f4f6f7;
}

h4 span {
  font-size: 9.6px;
  font-weight: normal;
  line-height: 1px;
}

.calc-input + h4 {
  margin-top: 6px;
}

.keys {
  display: grid;
  grid-template-columns: repeat(3, 23px);
  grid-auto-rows: 12px;
  gap: 4.5px 6px;
  margin: 1px 0 0 11px;
}

.keys span {
  border: 1px solid #87919a;
  text-align: center;
  line-height: 10px;
}

.science {
  margin-top: 10px;
}

.variables {
  margin-top: 11px;
}

.var-tools {
  display: flex;
  align-items: center;
  gap: 3px;
  height: 13px;
  margin: 1px 0 0 11px;
  color: #5eb2e8;
  font: italic 10px "Liberation Serif", serif;
}

.var-tools span {
  width: 12px;
  height: 12px;
  padding-left: 3px;
  line-height: 11px;
}

.var-tools .boxed {
  border: 1px solid #85909a;
  padding-left: 2px;
  line-height: 9px;
}

.var-tools .off {
  color: #9ba3ab;
}

.var-tools svg {
  width: 8px;
  height: 9px;
  margin-left: 3px;
}

sup, sub {
  font-size: 7px;
  line-height: 0;
  color: #e3b765;
  vertical-align: 2px;
}

sub {
  color: #9ba3ab;
  vertical-align: -1px;
}

.tree {
  height: 84px;
}

.tree div {
  display: flex;
  align-items: center;
  height: 12.25px;
  padding-left: 26px;
}

.tree .root {
  gap: 4px;
  height: 10px;
  padding-left: 4px;
}

.minus {
  width: 5px;
  height: 5px;
  background: linear-gradient(#f0f2f4 2px, #303840 2px, #303840 3px, #f0f2f4 3px);
}

.tree em {
  width: 12px;
  padding-left: 1px;
  color: #5eb2e8;
  font: italic 11px/10px "Liberation Serif", serif;
}

.tree .const {
  font: bold 9px/10px "Liberation Serif", serif;
}

.detail-title {
  margin: 0 0 2px 6px;
}

.detail {
  height: 49px;
  margin-left: 6px;
}

.units {
  margin-top: 19px;
}

.unit-row {
  display: grid;
  grid-template-columns: 65px 40px;
  height: 11px;
  margin-left: 6px;
  border-bottom: 1px solid #596470;
  line-height: 11px;
}

.unit-row span:first-child {
  padding-left: 15px;
  border-right: 1px solid #596470;
}

.unit-row span + span {
  padding-left: 3px;
}

/* input method badge floating over the window */
.ime {
  position: absolute;
  left: 1059px;
  top: 501px;
  width: 21px;
  height: 16px;
  background: linear-gradient(90deg, transparent 10px, #fff 10px);
}

.ime span {
  display: block;
  width: 17px;
  height: 17px;
  border-radius: 3px;
  background: #e9592b;
  color: #fff;
  font: bold 17px/17px "Liberation Sans", sans-serif;
  text-align: center;
  transform: rotate(-9deg);
}
```
